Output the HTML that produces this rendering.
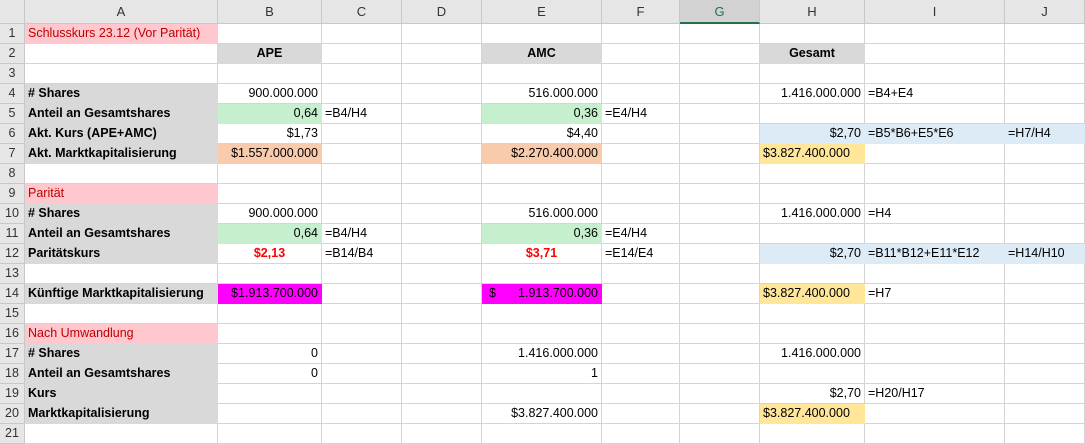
<!DOCTYPE html>
<html><head><meta charset="utf-8"><style>
body{margin:0;background:#fff;width:1085px;height:428px;overflow:hidden;font-family:"Liberation Sans",Arial,sans-serif;font-size:12.5px;color:#000}
table{border-collapse:separate;border-spacing:0;table-layout:fixed;position:absolute;left:0;top:0}
td{height:19px;padding:0 3px;border-right:1px solid #d4d4d4;border-bottom:1px solid #d4d4d4;white-space:nowrap;overflow:hidden;line-height:19px}
tr.h td{height:22px;background:#e6e6e6;text-align:center;color:#333;border-color:#c8c8c8;font-size:13px}
td.n{background:#e6e6e6;text-align:center;color:#333;border-color:#c8c8c8;padding:0}
.r{text-align:right}.c{text-align:center}.b{font-weight:bold}
.pk{background:#ffc7ce;color:#c00000;border-color:#ffc7ce}
.g{background:#d9d9d9;border-color:#d9d9d9}
.gr{background:#c6efce;border-color:#c6efce}
.o{background:#f8cbad;border-color:#f8cbad}
.y{background:#ffe699;border-color:#ffe699}
.bl{background:#ddebf7;border-color:#ddebf7}
.m{background:#ff00ff;border-color:#ff00ff}
.red{color:#f00;font-weight:bold}
tr.h td.sel{color:#217346;border-bottom:2px solid #217346;background:#d2d2d2}
</style></head><body>
<table>
<colgroup><col style="width:25px"><col style="width:193px"><col style="width:104px"><col style="width:80px"><col style="width:80px"><col style="width:120px"><col style="width:78px"><col style="width:80px"><col style="width:105px"><col style="width:140px"><col style="width:80px"></colgroup>
<tr class="h"><td></td><td>A</td><td>B</td><td>C</td><td>D</td><td>E</td><td>F</td><td class="sel">G</td><td>H</td><td>I</td><td>J</td></tr>
<tr><td class="n">1</td><td class="pk">Schlusskurs 23.12 (Vor Parität)</td><td></td><td></td><td></td><td></td><td></td><td></td><td></td><td></td><td></td></tr>
<tr><td class="n">2</td><td></td><td class="g c b">APE</td><td></td><td></td><td class="g c b">AMC</td><td></td><td></td><td class="g c b">Gesamt</td><td></td><td></td></tr>
<tr><td class="n">3</td><td></td><td></td><td></td><td></td><td></td><td></td><td></td><td></td><td></td><td></td></tr>
<tr><td class="n">4</td><td class="g b"># Shares</td><td class="r">900.000.000</td><td></td><td></td><td class="r">516.000.000</td><td></td><td></td><td class="r">1.416.000.000</td><td>=B4+E4</td><td></td></tr>
<tr><td class="n">5</td><td class="g b">Anteil an Gesamtshares</td><td class="gr r">0,64</td><td>=B4/H4</td><td></td><td class="gr r">0,36</td><td>=E4/H4</td><td></td><td></td><td></td><td></td></tr>
<tr><td class="n">6</td><td class="g b">Akt. Kurs (APE+AMC)</td><td class="r">$1,73</td><td></td><td></td><td class="r">$4,40</td><td></td><td></td><td class="bl r">$2,70</td><td class="bl">=B5*B6+E5*E6</td><td class="bl">=H7/H4</td></tr>
<tr><td class="n">7</td><td class="g b">Akt. Marktkapitalisierung</td><td class="o r">$1.557.000.000</td><td></td><td></td><td class="o r">$2.270.400.000</td><td></td><td></td><td class="y">$3.827.400.000</td><td></td><td></td></tr>
<tr><td class="n">8</td><td></td><td></td><td></td><td></td><td></td><td></td><td></td><td></td><td></td><td></td></tr>
<tr><td class="n">9</td><td class="pk">Parität</td><td></td><td></td><td></td><td></td><td></td><td></td><td></td><td></td><td></td></tr>
<tr><td class="n">10</td><td class="g b"># Shares</td><td class="r">900.000.000</td><td></td><td></td><td class="r">516.000.000</td><td></td><td></td><td class="r">1.416.000.000</td><td>=H4</td><td></td></tr>
<tr><td class="n">11</td><td class="g b">Anteil an Gesamtshares</td><td class="gr r">0,64</td><td>=B4/H4</td><td></td><td class="gr r">0,36</td><td>=E4/H4</td><td></td><td></td><td></td><td></td></tr>
<tr><td class="n">12</td><td class="g b">Paritätskurs</td><td class="c red">$2,13</td><td>=B14/B4</td><td></td><td class="c red">$3,71</td><td>=E14/E4</td><td></td><td class="bl r">$2,70</td><td class="bl">=B11*B12+E11*E12</td><td class="bl">=H14/H10</td></tr>
<tr><td class="n">13</td><td></td><td></td><td></td><td></td><td></td><td></td><td></td><td></td><td></td><td></td></tr>
<tr><td class="n">14</td><td class="g b">Künftige Marktkapitalisierung</td><td class="m r">$1.913.700.000</td><td></td><td></td><td class="m"><span style="float:left;padding-left:4px">$</span><span style="float:right">1.913.700.000</span></td><td></td><td></td><td class="y">$3.827.400.000</td><td>=H7</td><td></td></tr>
<tr><td class="n">15</td><td></td><td></td><td></td><td></td><td></td><td></td><td></td><td></td><td></td><td></td></tr>
<tr><td class="n">16</td><td class="pk">Nach Umwandlung</td><td></td><td></td><td></td><td></td><td></td><td></td><td></td><td></td><td></td></tr>
<tr><td class="n">17</td><td class="g b"># Shares</td><td class="r">0</td><td></td><td></td><td class="r">1.416.000.000</td><td></td><td></td><td class="r">1.416.000.000</td><td></td><td></td></tr>
<tr><td class="n">18</td><td class="g b">Anteil an Gesamtshares</td><td class="r">0</td><td></td><td></td><td class="r">1</td><td></td><td></td><td></td><td></td><td></td></tr>
<tr><td class="n">19</td><td class="g b">Kurs</td><td></td><td></td><td></td><td></td><td></td><td></td><td class="r">$2,70</td><td>=H20/H17</td><td></td></tr>
<tr><td class="n">20</td><td class="g b">Marktkapitalisierung</td><td></td><td></td><td></td><td class="r">$3.827.400.000</td><td></td><td></td><td class="y">$3.827.400.000</td><td></td><td></td></tr>
<tr><td class="n">21</td><td></td><td></td><td></td><td></td><td></td><td></td><td></td><td></td><td></td><td></td></tr>
</table>
</body></html>
